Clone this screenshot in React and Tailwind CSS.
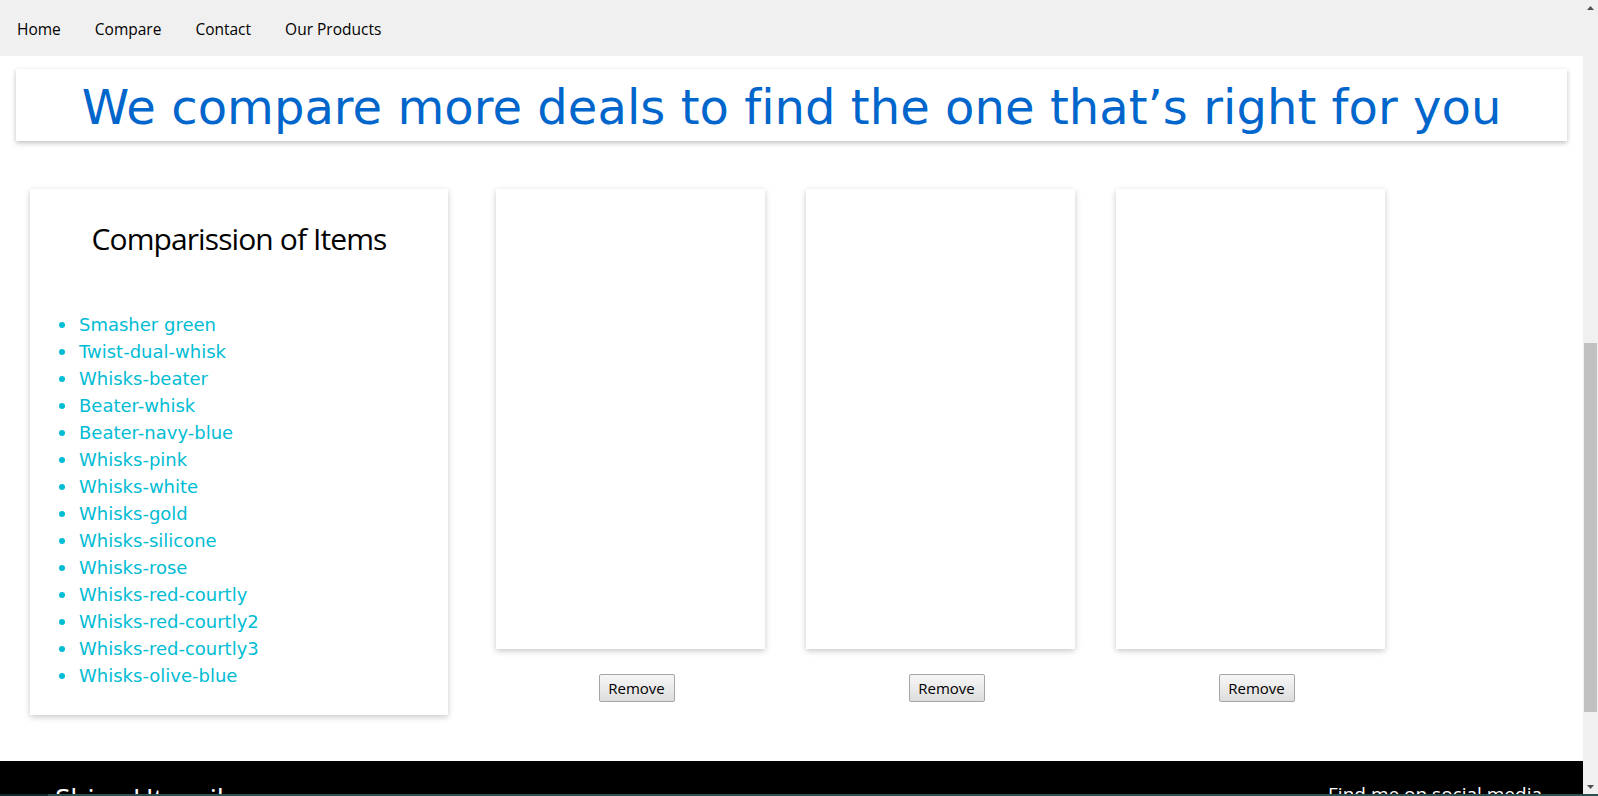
import React from "react";

const items = [
  "Smasher green",
  "Twist-dual-whisk",
  "Whisks-beater",
  "Beater-whisk",
  "Beater-navy-blue",
  "Whisks-pink",
  "Whisks-white",
  "Whisks-gold",
  "Whisks-silicone",
  "Whisks-rose",
  "Whisks-red-courtly",
  "Whisks-red-courtly2",
  "Whisks-red-courtly3",
  "Whisks-olive-blue",
];

function ProductColumn() {
  return (
    <div className="flex w-[269px] flex-col">
      <div className="h-[460px] w-[269px] bg-white shadow-[0_2px_6px_rgba(0,0,0,0.22)]" />
      <div className="mt-[25px] flex justify-center pl-[12px]">
        <button className="h-[28px] w-[76px] rounded-[2px] border border-[#a5a5a5] bg-gradient-to-b from-[#f7f7f7] to-[#dddddd] font-['Open_Sans',sans-serif] text-[15px] leading-none text-black">
          Remove
        </button>
      </div>
    </div>
  );
}

export default function App() {
  return (
    <div className="relative flex h-[796px] w-[1598px] overflow-hidden bg-white">
      <div className="flex h-[796px] w-[1583px] flex-col overflow-hidden">
        <nav className="flex h-[56px] shrink-0 items-center bg-[#f0f0f0] pt-[3px] font-['Open_Sans',sans-serif] text-[15.5px] text-black">
          <a className="px-[17px]">Home</a>
          <a className="px-[17px]">Compare</a>
          <a className="px-[17px]">Contact</a>
          <a className="px-[17px]">Our Products</a>
        </nav>

        <header className="mx-[16px] mt-[13px] h-[72px] shrink-0 bg-white pt-[5px] shadow-[0_2px_5px_rgba(0,0,0,0.25)]">
          <h1 className="text-center font-['DejaVu_Sans',Verdana,sans-serif] text-[48px] leading-[67px] tracking-[0.05px] text-[#0066cc] [font-variant-ligatures:none]">
            We compare more deals to find the one that’s right for you
          </h1>
        </header>

        <main className="mt-[48px] flex shrink-0 items-start">
          <section className="ml-[30px] w-[418px] bg-white pt-[29px] pb-[26px] shadow-[0_2px_6px_rgba(0,0,0,0.22)]">
            <h2 className="text-center font-['Open_Sans',sans-serif] text-[30px] leading-[41px] tracking-[-0.03em] text-black">
              Comparission of Items
            </h2>
            <ul className="mt-[52px] font-['DejaVu_Sans',Verdana,sans-serif] text-[18px] leading-[27px] text-[#00bcd4] [font-variant-ligatures:none]">
              {items.map((it) => (
                <li key={it} className="flex items-center pl-[29px]">
                  <span className="mr-[14px] h-[6px] w-[6px] rounded-full bg-[#00bcd4]" />
                  <span>{it}</span>
                </li>
              ))}
            </ul>
          </section>

          <div className="ml-[48px] flex gap-[41px]">
            <ProductColumn />
            <ProductColumn />
            <ProductColumn />
          </div>
        </main>

        <footer className="mt-[46px] flex min-h-0 flex-1 items-start justify-between overflow-hidden bg-black pl-[55px] pr-[41px] text-white">
          <div className="pt-[16px] font-['Open_Sans',sans-serif] text-[28px] leading-normal">
            Shiny Utensils
          </div>
          <div className="pt-[19px] font-['Open_Sans',sans-serif] text-[19px] leading-normal">
            Find me on social media
          </div>
        </footer>
      </div>

      <div className="flex h-[796px] w-[15px] flex-col items-center bg-[#f0f0f0]">
        <svg width="9" height="17" viewBox="0 0 9 17" className="shrink-0">
          <path d="M1 10 L4.5 6 L8 10 Z" fill="#505050" />
        </svg>
        <div className="mt-[326px] h-[369px] w-[13px] shrink-0 bg-[#c1c1c1]" />
        <div className="flex-1" />
        <svg width="9" height="17" viewBox="0 0 9 17" className="shrink-0">
          <path d="M1 6 L4.5 10 L8 6 Z" fill="#505050" />
        </svg>
      </div>

      <div className="absolute bottom-0 left-0 flex h-[2px] w-full">
        <div className="w-[48px] bg-[#0e2a2e]" />
        <div className="flex-1 bg-[#2e4f52]" />
      </div>
    </div>
  );
}
